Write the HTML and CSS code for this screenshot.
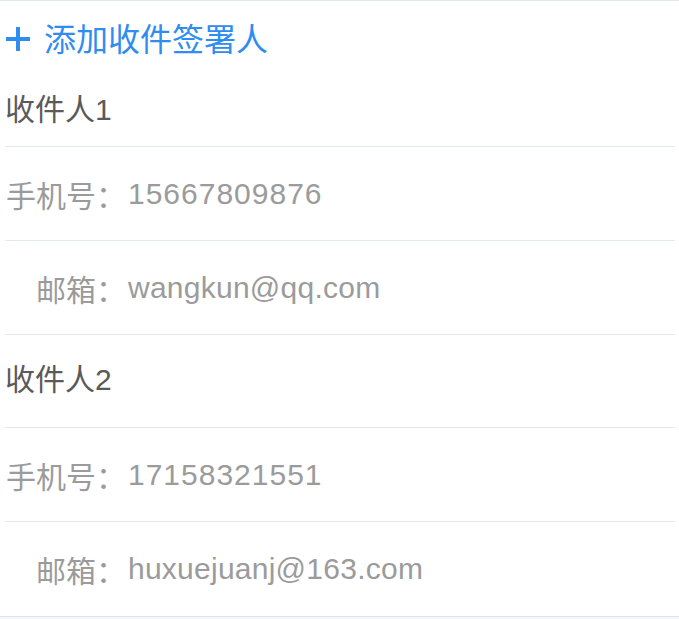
FILE: index.html
```html
<!DOCTYPE html>
<html lang="zh-CN">
<head>
<meta charset="utf-8">
<title>添加收件签署人</title>
<link rel="stylesheet" href="styles.css">
</head>
<body>
<div class="page">
  <div class="add">
    <svg class="plus" width="26" height="26" viewBox="0 0 26 26" aria-hidden="true">
      <rect x="11" y="1" width="4" height="24" fill="#2f8cf0"/>
      <rect x="1" y="11" width="24" height="4" fill="#2f8cf0"/>
    </svg>
    <span class="add-text">添加收件签署人</span>
  </div>

  <div class="group">
    <div class="title">收件人1</div>
    <div class="row"><span class="label">手机号：</span><span class="value num">15667809876</span></div>
    <div class="row"><span class="label">邮箱：</span><span class="value">wangkun@qq.com</span></div>
  </div>

  <div class="group last">
    <div class="title t2">收件人2</div>
    <div class="row"><span class="label">手机号：</span><span class="value num">17158321551</span></div>
    <div class="row"><span class="label">邮箱：</span><span class="value">huxuejuanj@163.com</span></div>
  </div>
</div>
</body>
</html>
```
FILE: styles.css
```css
html, body {
  margin: 0;
  padding: 0;
}
body {
  background: #f6f5fb;
  font-family: "Liberation Sans", "Noto Sans CJK SC", sans-serif;
}
.page {
  background: #ffffff;
  border-top: 1px solid #e1e6ef;
  border-bottom: 1px solid #dfe4ef;
  width: 679px;
}
.add {
  height: 79px;
  display: flex;
  align-items: center;
  padding-left: 5px;
  color: #2f8cf0;
  font-size: 32px;
}
.plus {
  display: block;
  margin-right: 13px;
  margin-top: -4px;
}
.add-text {
  line-height: 1;
  margin-top: -2px;
}
.group {
  margin: 0 4px 0 5px;
}
.title {
  height: 67px;
  display: flex;
  align-items: center;
  padding-bottom: 12px;
  box-sizing: border-box;
  font-size: 30px;
  color: #5a5a5a;
  border-bottom: 1px solid #e3e7ef;
}
.title.t2 {
  height: 93px;
  padding-bottom: 8px;
}
.row {
  height: 93px;
  display: flex;
  align-items: center;
  font-size: 30px;
  color: #9b9b9b;
  border-bottom: 1px solid #e3e7ef;
}
.group.last .row:last-child {
  border-bottom: none;
  height: 94px;
}
.label {
  width: 121px;
  text-align: right;
  flex: none;
}
.value {
  margin-left: 2px;
  letter-spacing: 0.25px;
}
.num {
  letter-spacing: 1px;
}
```
